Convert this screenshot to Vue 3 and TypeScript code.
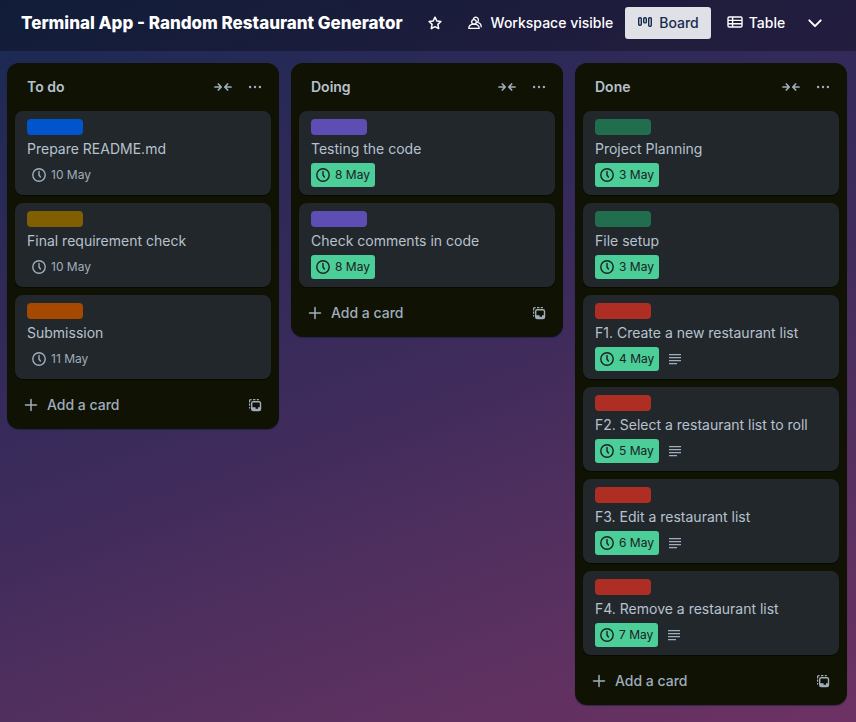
<script setup lang="ts">
type LabelColor = 'blue' | 'yellow' | 'orange' | 'purple' | 'green' | 'red'

interface Card {
  title: string
  due: string
  label: LabelColor
  complete?: boolean
  description?: boolean
}

interface List {
  name: string
  cards: Card[]
}

const lists: List[] = [
  {
    name: 'To do',
    cards: [
      { title: 'Prepare README.md', due: '10 May', label: 'blue' },
      { title: 'Final requirement check', due: '10 May', label: 'yellow' },
      { title: 'Submission', due: '11 May', label: 'orange' },
    ],
  },
  {
    name: 'Doing',
    cards: [
      { title: 'Testing the code', due: '8 May', label: 'purple', complete: true },
      { title: 'Check comments in code', due: '8 May', label: 'purple', complete: true },
    ],
  },
  {
    name: 'Done',
    cards: [
      { title: 'Project Planning', due: '3 May', label: 'green', complete: true },
      { title: 'File setup', due: '3 May', label: 'green', complete: true },
      { title: 'F1. Create a new restaurant list', due: '4 May', label: 'red', complete: true, description: true },
      { title: 'F2. Select a restaurant list to roll', due: '5 May', label: 'red', complete: true, description: true },
      { title: 'F3. Edit a restaurant list', due: '6 May', label: 'red', complete: true, description: true },
      { title: 'F4. Remove a restaurant list', due: '7 May', label: 'red', complete: true, description: true },
    ],
  },
]
</script>

<template>
  <div class="page">
    <header class="topbar">
      <h1 class="board-name">Terminal App - Random Restaurant Generator</h1>
      <button class="btn star" type="button" aria-label="Star board">
        <svg width="16" height="16" viewBox="0 0 16 16" fill="none" stroke="currentColor" stroke-width="1.5" stroke-linejoin="round">
          <path d="M8 2.2 9.8 5.9 13.9 6.5 10.9 9.4 11.7 13.6 8 11.7 4.3 13.6 5.1 9.4 2.1 6.5 6.2 5.9Z" />
        </svg>
      </button>
      <button class="btn visibility" type="button">
        <svg width="16" height="16" viewBox="0 0 16 16" fill="none" stroke="currentColor" stroke-width="1.3" stroke-linecap="round" stroke-linejoin="round">
          <circle cx="7" cy="6.9" r="2.3" />
          <path d="M1.8 13.4c0-2.5 2.1-4.2 5.2-4.2s5.2 1.7 5.2 4.2Z" />
          <path d="M6.4 3.9a2.6 2.6 0 1 1 4.7 2.2l-.5 1.2c2.3.6 3.6 2.2 3.6 4.5" />
        </svg>
        Workspace visible
      </button>
      <nav class="views" aria-label="Board views">
        <button class="btn view selected" type="button" aria-current="page">
          <svg width="16" height="16" viewBox="0 0 16 16" fill="none" stroke="currentColor" stroke-width="1.4">
            <rect x="1.7" y="2.7" width="2.6" height="7.6" rx="1" />
            <rect x="6.7" y="2.7" width="2.6" height="5.2" rx="1" />
            <rect x="11.7" y="2.7" width="2.6" height="8.6" rx="1" />
          </svg>
          Board
        </button>
        <button class="btn view" type="button">
          <svg width="16" height="16" viewBox="0 0 16 16" fill="none" stroke="currentColor" stroke-width="1.4">
            <rect x="1" y="2" width="14" height="10" rx="1.2" />
            <path d="M5.6 2v10M1 5.4h14M1 8.7h14" />
          </svg>
          Table
        </button>
        <button class="btn more" type="button" aria-label="More views">
          <svg width="16" height="16" viewBox="0 0 16 16" fill="none" stroke="currentColor" stroke-width="2" stroke-linecap="round" stroke-linejoin="round">
            <path d="m2.3 5.4 5.7 5.7 5.7-5.7" />
          </svg>
        </button>
      </nav>
    </header>

    <main class="board">
      <section v-for="list in lists" :key="list.name" class="list">
        <header class="list-header">
          <h2>{{ list.name }}</h2>
          <button class="icon-btn collapse" type="button" :aria-label="`Collapse ${list.name}`">
            <svg width="20" height="16" viewBox="0 0 20 16" fill="none" stroke="currentColor" stroke-width="1.7" stroke-linecap="round" stroke-linejoin="round">
              <path d="M2 8h5.8M5.3 5 8.2 8l-2.9 3M18 8h-5.8M14.7 5l-2.9 3 2.9 3" />
            </svg>
          </button>
          <button class="icon-btn" type="button" :aria-label="`${list.name} actions`">
            <svg width="16" height="16" viewBox="0 0 16 16" fill="currentColor">
              <circle cx="3.1" cy="8" r="1.2" />
              <circle cx="8" cy="8" r="1.2" />
              <circle cx="12.9" cy="8" r="1.2" />
            </svg>
          </button>
        </header>

        <ol class="cards">
          <li v-for="card in list.cards" :key="card.title" class="card">
            <span class="label" :class="card.label"></span>
            <h3>{{ card.title }}</h3>
            <div class="badges">
              <span class="due" :class="{ complete: card.complete }">
                <svg width="16" height="16" viewBox="0 0 16 16" fill="none" stroke="currentColor" stroke-width="1.4" stroke-linecap="round" stroke-linejoin="round">
                  <circle cx="8" cy="8" r="6.2" />
                  <path d="M8 4.4V8l1.4 2" />
                </svg>
                {{ card.due }}
              </span>
              <svg v-if="card.description" class="desc" width="16" height="16" viewBox="0 0 16 16" fill="none" stroke="currentColor" stroke-width="1.4">
                <path d="M2 3.6h12M2 6.6h12M2 9.6h12M2 12.6h8" />
              </svg>
            </div>
          </li>
        </ol>

        <footer class="list-footer">
          <button class="add" type="button">
            <svg width="16" height="16" viewBox="0 0 16 16" fill="none" stroke="currentColor" stroke-width="1.5" stroke-linecap="round">
              <path d="M8 2.5v11M2.5 8h11" />
            </svg>
            Add a card
          </button>
          <button class="icon-btn" type="button" aria-label="Create from template">
            <svg width="16" height="16" viewBox="0 0 16 16" fill="none" stroke="currentColor">
              <path d="M2.6 11.5V10M2.6 8.8V6.6M2.6 5.4V3.6Q2.6 2.6 3.6 2.6h1M6 2.6h2.4M9.8 2.6h2" stroke-width="1.2" />
              <rect x="4.7" y="4.7" width="8.8" height="8.8" rx="1.6" stroke-width="1.4" />
              <path d="M5 11.1h3.6M11 11.1h2.4" stroke-width="1.6" />
              <path d="M5 12.4h8.2" stroke-width="1.2" />
            </svg>
          </button>
        </footer>
      </section>
    </main>
  </div>
</template>

<style>
body {
  background: #3b2a5a;
}
</style>

<style scoped>
.page {
  min-height: 100vh;
  box-sizing: border-box;
  background: linear-gradient(160deg, #182a52 0%, #2b2957 22%, #3b2b5b 48%, #55305f 74%, #6d3263 100%);
  font-family: Inter, 'Liberation Sans', sans-serif;
  font-size: 14px;
  line-height: 20px;
  color: #b6c2cf;
}

button {
  border: 0;
  background: none;
  color: inherit;
  font: inherit;
  cursor: pointer;
}

svg {
  flex: none;
  display: block;
}

.topbar {
  display: flex;
  align-items: center;
  padding: 7px 12px 12px 21px;
  background: rgba(0, 0, 0, 0.3);
  color: #fff;
}

.board-name {
  margin: 0;
  font-size: 17px;
  line-height: 32px;
  font-weight: 800;
  white-space: nowrap;
}

.btn {
  display: flex;
  align-items: center;
  gap: 8px;
  height: 32px;
  padding: 0 8px;
  border-radius: 3px;
  font-weight: 500;
  white-space: nowrap;
}

.star {
  margin-left: 16px;
}

.visibility {
  margin-left: 8px;
}

.views {
  display: flex;
  gap: 4px;
  margin-left: 4px;
}

.view {
  gap: 6px;
  padding: 0 12px;
}

.more {
  padding: 0 6px;
}

.selected {
  background: #dfe1e6;
  color: #172b4d;
}

.board {
  display: flex;
  align-items: flex-start;
  gap: 12px;
  padding: 12px 7px;
}

.list {
  flex: 0 0 272px;
  box-sizing: border-box;
  padding: 8px;
  border-radius: 12px;
  background: #101204;
  box-shadow: 0 1px 1px rgba(9, 30, 66, 0.5);
}

.list-header {
  display: flex;
  align-items: center;
  height: 32px;
  margin-bottom: 8px;
  padding-left: 12px;
}

.list-header h2 {
  flex: 1;
  margin: 0;
  font-size: 14px;
  font-weight: 600;
}

.icon-btn {
  display: flex;
  align-items: center;
  justify-content: center;
  width: 32px;
  height: 32px;
  padding: 0;
  color: #9fadbc;
}

.cards {
  display: grid;
  gap: 8px;
  margin: 0;
  padding: 0;
  list-style: none;
}

.card {
  padding: 8px 12px;
  border-radius: 8px;
  background: #22272b;
  box-shadow: 0 1px 1px rgba(3, 4, 4, 0.5);
}

.label {
  display: block;
  width: 56px;
  height: 16px;
  margin-bottom: 4px;
  border-radius: 4px;
}

.blue {
  background: #0055cc;
}

.yellow {
  background: #7f5f01;
}

.orange {
  background: #a54800;
}

.purple {
  background: #5e4db2;
}

.green {
  background: #216e4e;
}

.red {
  background: #ae2e24;
}

.card h3 {
  margin: 0 0 4px;
  font-size: 14px;
  font-weight: 400;
}

.badges {
  display: flex;
  align-items: center;
  gap: 8px;
  color: #9fadbc;
}

.due {
  display: flex;
  align-items: center;
  gap: 4px;
  height: 24px;
  padding: 0 5px 0 4px;
  border-radius: 3px;
  font-size: 12px;
}

.complete {
  background: #4bce97;
  color: #1d2125;
}

.list-footer {
  display: flex;
  align-items: center;
  padding-top: 10px;
}

.add {
  flex: 1;
  display: flex;
  align-items: center;
  gap: 8px;
  height: 32px;
  padding: 0 8px;
  color: #9fadbc;
  font-weight: 500;
}
</style>
